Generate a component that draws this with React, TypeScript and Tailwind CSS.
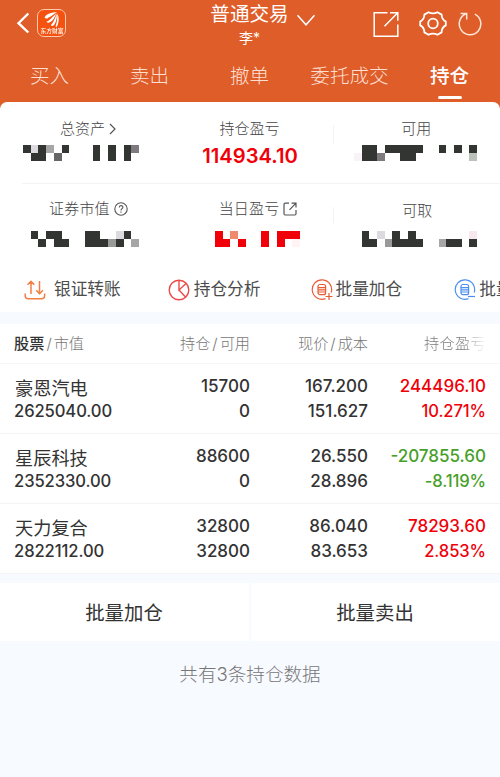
import React from 'react';

interface Holding {
  name: string;
  marketValue: string;
  position: string;
  available: string;
  price: string;
  cost: string;
  profit: string;
  rate: string;
  up: boolean;
}

const TABS = ['买入', '卖出', '撤单', '委托成交', '持仓'];

const HOLDINGS: Holding[] = [
  { name: '豪恩汽电', marketValue: '2625040.00', position: '15700', available: '0', price: '167.200', cost: '151.627', profit: '244496.10', rate: '10.271%', up: true },
  { name: '星辰科技', marketValue: '2352330.00', position: '88600', available: '0', price: '26.550', cost: '28.896', profit: '-207855.60', rate: '-8.119%', up: false },
  { name: '天力复合', marketValue: '2822112.00', position: '32800', available: '32800', price: '86.040', cost: '83.653', profit: '78293.60', rate: '2.853%', up: true },
];

// one character per mosaic cell
const SHADES: Record<string, string> = {
  '#': '#323532',
  m: '#666666',
  g: '#7e7a7e',
  d: '#999999',
  a: '#a6a6a6',
  s: '#bcc2bb',
  l: '#dddadf',
  w: '#f8f3f7',
  p: '#f6e8ee',
  r: '#f00008',
  o: '#f08a6c',
  f: '#fff3f3',
};

const Mosaic: React.FC<{ rows: string[]; className: string }> = ({ rows, className }) => (
  <svg className={className} viewBox={`0 0 ${rows[0].length} ${rows.length}`} preserveAspectRatio="none" shapeRendering="crispEdges">
    {rows.map((row, y) =>
      row.split('').map((c, x) => (c === '.' ? null : <rect key={`${x}-${y}`} x={x} y={y} width={1} height={1} fill={SHADES[c]} />)),
    )}
  </svg>
);

const Logo = () => (
  <div className="ml-[7px] flex h-7 w-[29px] flex-col items-center rounded-[7px] border border-[#ffc9ae] bg-[#f5520f]">
    <svg className="mt-[2px] h-[16px] w-[17px] shrink-0" viewBox="0 0 17 16" fill="#fff">
      <path d="M1.500 5.500C3.500 1.800 8 .4 14.500.3 10.500 1.600 9 4.800 5.500 5.400 4.500 7 2.200 7 1.500 5.500Z" />
      <path d="M3.500 9.800C7 8.500 9 5.300 13 1.500 12 5.500 9.500 9.300 6.800 10.300 5.500 11 4 10.800 3.500 9.800Z" />
      <path d="M7.800 13.200C10.800 10.300 12.300 6 13.700 1.600 14.200 6 13 10.800 10.800 13.300 9.800 14.300 8.400 14.200 7.800 13.200Z" />
      <path d="M12.500 14.500C14.200 10.500 14.400 6 14.200 1.600 16.500 5 16 11 13.900 14.800Z" />
    </svg>
    <span className="-mt-px origin-top scale-[.58] text-[10px] leading-[14px] font-medium whitespace-nowrap text-white">东方财富</span>
  </div>
);

const Header = () => (
  <header className="h-[108px] bg-[#de5d28] text-white">
    <div className="grid h-[52px] grid-cols-[1fr_120px_1fr]">
      <div className="flex items-center pb-[6px] pl-4">
        <svg className="h-[22px] w-[14px]" viewBox="0 0 14 22" fill="none" stroke="#fff" strokeWidth="2.400">
          <path d="M12.300 1.500 2.500 11.200l9.800 9.300" />
        </svg>
        <Logo />
      </div>
      <div className="flex flex-col items-center">
        <div className="relative mt-px mr-px text-[19.600px] leading-[26px] whitespace-nowrap">
          普通交易
          <svg className="absolute top-[13px] -right-[27px] h-[13px] w-[20px]" viewBox="0 0 20 13" fill="none" stroke="#fff" strokeWidth="1.500">
            <path d="m1.500 1.300 8.500 9.500 8.500-9.500" />
          </svg>
        </div>
        <span className="mt-px mr-px text-[14px] leading-[20px]">李*</span>
      </div>
      <div className="flex items-center justify-end pr-[18px] pb-[5px]">
        <svg className="h-[26px] w-[26px]" viewBox="0 0 26 26" fill="none" stroke="#fff" strokeWidth="1.500">
          <path d="M14.500 1.800H1.200v23.400h23.600V13.500M17 1.800h7.800v8M24.500 2 11.500 15.200" />
        </svg>
        <svg className="ml-[20px] h-[27px] w-[28px]" viewBox="0 0 28 27" fill="none" stroke="#fff" strokeWidth="1.800" strokeLinejoin="round">
          <path d="M9.500 2.200Q14 4.500 18.500 2.200L22.600 4.600Q22.700 9.500 26.800 11.600V15.400Q22.700 17.500 22.600 22.400L18.500 24.800Q14 22.500 9.500 24.800L5.400 22.400Q5.300 17.500 1.200 15.400V11.600Q5.300 9.500 5.400 4.600Z" />
          <circle cx="14" cy="13.500" r="4.800" />
        </svg>
        <svg className="ml-[11px] h-[25px] w-[24px]" viewBox="0 0 24 25" fill="none" stroke="#ffe6da" strokeWidth="1.500">
          <path d="M16.800 3.200A10.800 10.800 0 1 1 8.200 2.800M2.600 2.500H8.700V8.600" />
        </svg>
      </div>
    </div>
    <nav className="grid grid-cols-5">
      {TABS.map((tab) => {
        const active = tab === '持仓';
        return (
          <div key={tab} className={active ? 'flex flex-col items-center font-medium' : 'flex flex-col items-center font-light text-[#fddfd2]'}>
            <span className="mt-[9px] mr-px text-[19.600px] leading-[30px]">{tab}</span>
            {active && <span className="mt-[5px] h-[3px] w-6 rounded-full bg-white" />}
          </div>
        );
      })}
    </nav>
  </header>
);

const Summary = () => (
  <div className="text-[15px] font-light text-[#444]">
    <div className="grid h-[81px] grid-cols-3">
      <div className="flex flex-col items-start">
        <div className="mt-[16px] ml-[60px] flex items-center leading-[22px]">
          总资产
          <svg className="ml-1 h-3 w-[7px]" viewBox="0 0 7 12" fill="none" stroke="#555" strokeWidth="1.200">
            <path d="m1 1 5 5-5 5" />
          </svg>
        </div>
        <Mosaic className="mt-[5px] ml-[23px] h-4 w-[116px]" rows={['#l#a.#...#.#.#g', '.##.m....#.#.#.']} />
      </div>
      <div className="flex flex-col items-center">
        <span className="mt-[16px] mr-px leading-[22px]">持仓盈亏</span>
        <span className="mt-[4px] text-[20.200px] leading-6 font-semibold text-[#f00008]">114934.10</span>
      </div>
      <div className="flex">
        <span className="mt-[23px] h-[19px] w-px bg-[#f3f3f5]" />
        <div className="flex flex-col items-start">
          <span className="mt-[16px] ml-[67px] leading-[22px]">可用</span>
          <Mosaic className="mt-[5px] ml-[20px] h-4 w-[123px]" rows={['.##.#####..#.#.#', 'w##g..##.......s']} />
        </div>
      </div>
    </div>
    <div className="ml-[22px] h-px bg-[#f3f3f5]" />
    <div className="grid h-[81px] grid-cols-3">
      <div className="flex flex-col items-start">
        <div className="mt-[14px] ml-[49px] flex items-center leading-[22px]">
          <span className="tracking-[.2px]">证券市值</span>
          <svg className="ml-[4px] h-[14px] w-[14px]" viewBox="0 0 14 14" fill="none" stroke="#555" strokeWidth="1.100">
            <circle cx="7" cy="7" r="6.200" />
            <path d="M5.200 5.500C5.200 3 8.900 3 8.900 5.300 8.900 6.700 7 6.700 7 8.500M7 9.500v1.200" />
          </svg>
        </div>
        <Mosaic className="mt-[11px] ml-[23px] h-4 w-[116px]" rows={['.#.##...##..l#.', '..#.##..###d#.a']} />
      </div>
      <div className="flex flex-col items-start">
        <div className="mt-[14px] ml-[52px] flex items-center leading-[22px]">
          <span className="tracking-[.2px]">当日盈亏</span>
          <svg className="ml-[4px] h-[14px] w-[14px]" viewBox="0 0 14 14" fill="none" stroke="#555" strokeWidth="1.200">
            <path d="M6 1.200H2.200Q1 1.200 1 2.400V11.800Q1 13 2.200 13H11.800Q13 13 13 11.800V8M8.500 1.200H13V5.500M13 1.200 6.500 7.800" />
          </svg>
        </div>
        <Mosaic className="mt-[11px] ml-[48px] h-4 w-[85px]" rows={['r.o...r.rrr', 'rr.r..r.r.f']} />
      </div>
      <div className="flex">
        <span className="mt-[23px] h-[16px] w-px bg-[#f3f3f5]" />
        <div className="flex flex-col items-start">
          <span className="mt-[16px] ml-[68px] leading-[22px]">可取</span>
          <Mosaic className="mt-[9px] ml-[20px] h-4 w-[123px]" rows={['.#.l.#.#.......p', '.##.d####..a##.#']} />
        </div>
      </div>
    </div>
  </div>
);

const BatchIcon: React.FC<{ color: string; plus?: boolean; className: string }> = ({ color, plus, className }) => (
  <svg className={className} viewBox="0 0 22 22" fill="none" stroke={color} strokeWidth="1.200">
    <path d="M14.500 19.600A9.700 9.700 0 1 1 20.200 13.500" />
    <rect x="7" y="5.500" width="7.600" height="10.200" rx="2" />
    <path d="M7 8.600h7.600M7 10.800h7.600M7 13h7.600" />
    <path d={plus ? 'M14.500 17.500h7M18 14v7' : 'M14 17.500h7'} />
  </svg>
);

const Actions = () => (
  <div className="flex h-[47px] items-center overflow-hidden pt-[2px] text-[16.700px] whitespace-nowrap text-[#4c4c4c]">
    <svg className="ml-[24px] h-[22px] w-[22px] shrink-0" viewBox="0 0 22 22" fill="none" stroke="#ef7f45" strokeWidth="1.500">
      <path d="M7 15V2.500M3.500 5.800 7 2.300l3.300 3.500M15.500 2v12.700M12.200 11.200l3.300 3.500 3.500-3.500M1.200 14.500v2.300q0 3 3 3h13.400q3 0 3-3v-2.300" />
    </svg>
    <span className="ml-[8px] w-[67px]">银证转账</span>
    <svg className="ml-[47px] h-[22px] w-[22px] shrink-0" viewBox="0 0 22 22" fill="none" stroke="#ec4a48" strokeWidth="1.400">
      <circle cx="11" cy="11" r="9.800" />
      <path d="M11 1.200V11l7-6.500M11 11l6.500 7" />
    </svg>
    <span className="ml-[4px] w-[67px]">持仓分析</span>
    <BatchIcon className="ml-[50px] h-[22px] w-[22px] shrink-0" color="#e75c34" plus />
    <span className="ml-[3px] w-[67px]">批量加仓</span>
    <BatchIcon className="ml-[52px] h-[22px] w-[22px] shrink-0" color="#4a8ff0" />
    <span className="ml-[3px]">批量卖出</span>
  </div>
);

const HoldingRow: React.FC<{ item: Holding }> = ({ item }) => (
  <div className="grid h-[70px] grid-cols-[136px_100px_118px_118px] border-b border-[#f3f4f6] pt-[11px] pl-[14px] text-right text-[17px] leading-[24px] font-medium text-[#333]">
    <div className="text-left">
      <div className="mt-px -mb-px ml-px text-[18.200px] font-normal">{item.name}</div>
      <div className="text-[16.600px] tracking-[-.1px]">{item.marketValue}</div>
    </div>
    <div className="-mt-px">
      <div>{item.position}</div>
      <div className="pt-px">{item.available}</div>
    </div>
    <div className="-mt-px">
      <div>{item.price}</div>
      <div className="pt-px">{item.cost}</div>
    </div>
    <div className={item.up ? '-mt-px text-[#f00008]' : '-mt-px text-[#479f2a]'}>
      <div>{item.profit}</div>
      <div className="pt-px text-[16.600px] tracking-[-.1px]">{item.rate}</div>
    </div>
  </div>
);

const Slash = () => <span className="mx-[2px]">/</span>;

export default function App() {
  return (
    <div className="h-[777px] w-[500px] overflow-hidden bg-[#f7faff] font-['Inter','Noto_Sans_CJK_SC',sans-serif]">
      <Header />
      <main className="-mt-[6px]">
        <section className="rounded-t-[7px] bg-white">
          <Summary />
          <Actions />
        </section>
        <section className="mt-3 bg-white">
          <div className="grid h-[40px] grid-cols-[136px_100px_118px_118px] items-center border-b border-[#f7f7f8] pt-px pl-[14px] text-right text-[15.200px] font-light text-[#777]">
            <div className="text-left">
              <span className="font-medium text-[#333]">股票</span>
              <Slash />
              市值
            </div>
            <div>
              持仓
              <Slash />
              可用
            </div>
            <div>
              现价
              <Slash />
              成本
            </div>
            <div className="bg-linear-to-r from-[#777] from-80% to-white bg-clip-text tracking-[.3px] text-transparent">持仓盈亏</div>
          </div>
          {HOLDINGS.map((item) => (
            <HoldingRow key={item.name} item={item} />
          ))}
        </section>
        <section className="mt-[9px] grid h-[58px] grid-cols-2 gap-[2px] text-[19.400px] text-[#333]">
          <div className="flex items-center justify-center bg-white pt-[3px] pr-px">批量加仓</div>
          <div className="flex items-center justify-center bg-white pt-[3px] pr-px">批量卖出</div>
        </section>
        <p className="mt-[19px] text-center text-[18.600px] leading-7 font-light text-[#777]">共有3条持仓数据</p>
      </main>
    </div>
  );
}
